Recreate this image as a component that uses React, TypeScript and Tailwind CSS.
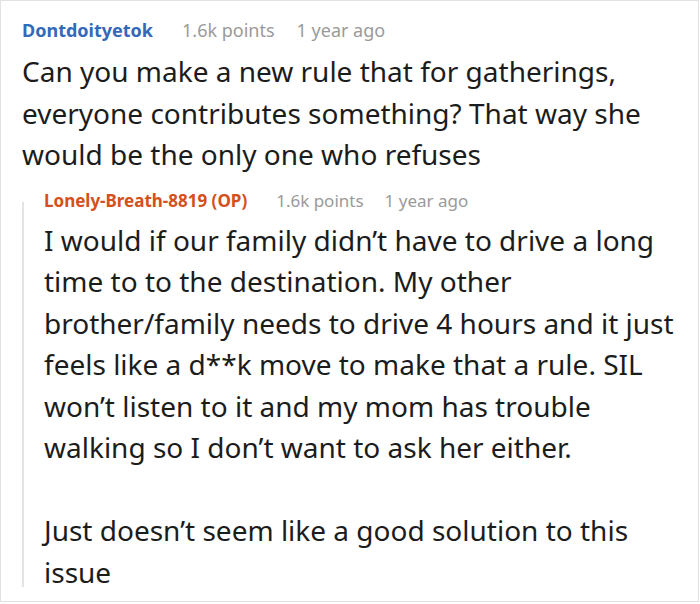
export default function App() {
  return (
    <div
      className="h-[602px] w-[699px] overflow-hidden border border-[#e2e2e2] bg-white text-[#1c1c1c]"
      style={{ fontFamily: '"Noto Sans", "Open Sans", sans-serif' }}
    >
      <div className="pl-[21px] pr-[10px] pt-[17px]">
        <div className="flex items-baseline text-[18px] leading-6">
          <span className="font-bold text-[#3468b8]">Dontdoityetok</span>
          <span className="ml-[29px] text-[#9a9a9a]">1.6k points</span>
          <span className="ml-[22px] text-[#9a9a9a]">1 year ago</span>
        </div>
        <p className="mt-[9px] text-[28px] leading-[41.5px]">
          Can you make a new rule that for gatherings, everyone contributes
          something? That way she would be the only one who refuses
        </p>

        <div className="mt-[26px] flow-root border-l-2 border-[#e4e4e4] pl-[20px]">
          <div className="-mt-[13px] flex items-baseline text-[17px] leading-6">
            <span className="font-bold text-[#d4501c]">
              Lonely-Breath-8819 (OP)
            </span>
            <span className="ml-[29px] text-[#9a9a9a]">1.6k points</span>
            <span className="ml-[21px] text-[#9a9a9a]">1 year ago</span>
          </div>
          <p className="mt-[7px] text-[28px] leading-[41.5px]">
            I would if our family didn’t have to drive a long time to to the
            destination. My other brother/family needs to drive 4 hours and it
            just feels like a d**k move to make that a rule. SIL won’t listen
            to it and my mom has trouble walking so I don’t want to ask her
            either.
          </p>
          <p className="-mb-[6px] mt-[41.5px] text-[28px] leading-[41.5px]">
            Just doesn’t seem like a good solution to this issue
          </p>
        </div>
      </div>
    </div>
  );
}
